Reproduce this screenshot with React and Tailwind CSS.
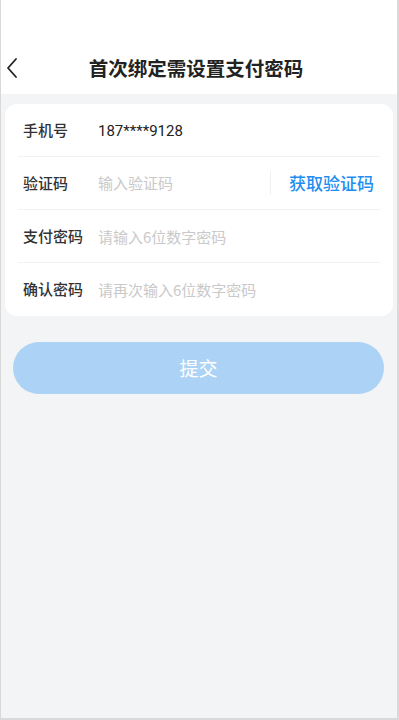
import React from 'react';

const font = { fontFamily: '"Noto Sans CJK SC", "Noto Sans", Roboto, sans-serif' };

function Row({ label, children, last = false }) {
  return (
    <div className={`mx-[13px] flex h-[53px] items-center ${last ? '' : 'border-b border-[#f2f2f2]'}`}>
      <span className="w-[75px] shrink-0 pl-[5px] text-[15px] font-medium text-[#333]">{label}</span>
      {children}
    </div>
  );
}

function Placeholder({ children }) {
  return <span className="text-[15px] text-[#c9c9c9]">{children}</span>;
}

export default function App() {
  return (
    <div style={font} className="flex h-[720px] w-[399px] flex-col border-b-2 border-l border-r-2 border-[#d9d9d9] bg-[#f3f4f6]">
      <div className="relative flex h-[94px] items-end bg-white pb-[11px]">
        <button className="absolute left-[4px] bottom-[12px] flex h-[28px] w-[20px] items-center">
          <svg width="14" height="22" viewBox="0 0 14 22" fill="none" stroke="#222" strokeWidth="1.8" strokeLinecap="round" strokeLinejoin="round">
            <path d="M11 2 L3 11 L11 20" />
          </svg>
        </button>
        <h1 className="w-full pr-[6px] text-center text-[19.5px] font-bold leading-[30px] text-[#222]">首次绑定需设置支付密码</h1>
      </div>

      <div className="mx-[4px] mt-[10px] w-[388px] rounded-[12px] bg-white">
        <Row label="手机号">
          <span className="pl-[5px] pt-[2px] text-[15px] text-[#222]" style={{ fontFamily: 'Roboto, "Noto Sans CJK SC", sans-serif' }}>187****9128</span>
        </Row>
        <Row label="验证码">
          <div className="flex flex-1 items-center pl-[5px] pr-[6px]">
            <Placeholder>输入验证码</Placeholder>
            <div className="ml-auto h-[24px] w-px bg-[#f0f0f0]" />
            <span className="ml-[18px] text-[17px] font-medium text-[#1e8ef0]">获取验证码</span>
          </div>
        </Row>
        <Row label="支付密码">
          <span className="pl-[5px]"><Placeholder>请输入6位数字密码</Placeholder></span>
        </Row>
        <Row label="确认密码" last>
          <span className="pl-[5px]"><Placeholder>请再次输入6位数字密码</Placeholder></span>
        </Row>
      </div>

      <button className="mx-[12px] mt-[26px] h-[52px] w-[371px] rounded-full bg-[#acd3f5] text-[19px] text-white">
        提交
      </button>
    </div>
  );
}
